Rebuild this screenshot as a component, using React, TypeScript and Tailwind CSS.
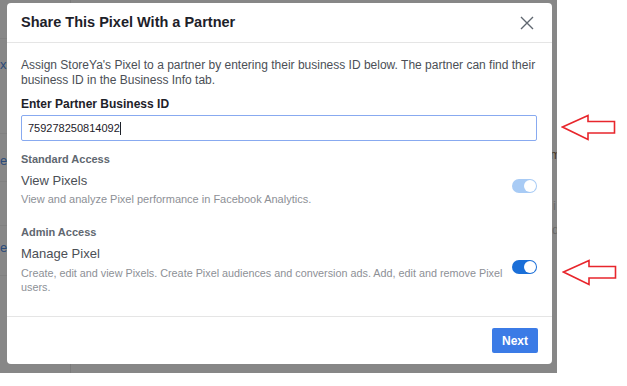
const Toggle = ({ disabled }: { disabled?: boolean }) => {
  return (
    <div
      className={`w-[25px] h-[14px] rounded-full flex items-center justify-end pr-[1px] shrink-0 ${
        disabled ? "bg-[#a8cbf5]" : "bg-[#1b6fd8]"
      }`}
    >
      <div className="w-[12px] h-[12px] rounded-full bg-white"></div>
    </div>
  );
};

const Arrow = ({ className }: { className: string }) => {
  return (
    <svg className={className} width="56" height="28" viewBox="0 0 56 28" fill="none">
      <path
        d="M1.5 13 L27 1.5 L27 7.5 L53.5 7.5 L53.5 19 L27 19 L27 25.5 Z"
        stroke="#e8262c"
        strokeWidth="1.6"
        fill="white"
        strokeLinejoin="miter"
      />
    </svg>
  );
};

export default function App() {
  return (
    <div
      className="w-[627px] h-[386px] bg-white relative overflow-hidden"
      style={{ fontFamily: '"Liberation Sans", Arial, sans-serif' }}
    >
      {/* Backdrop */}
      <div className="w-[557px] h-[373px] bg-[#878787] relative overflow-hidden pt-[3px] pl-[7px]">
        {/* page behind the overlay */}
        <div className="absolute left-[70px] top-0 w-[1px] h-full bg-[#7b7b7b]"></div>
        <div className="absolute left-0 top-[38px] w-[70px] h-[1px] bg-[#808080]"></div>
        <div className="absolute left-0 top-[133px] w-[70px] h-[1px] bg-[#808080]"></div>
        <div className="absolute left-0 top-[181px] w-[70px] h-[1px] bg-[#808080]"></div>
        <div className="absolute left-0 top-[225px] w-[70px] h-[1px] bg-[#808080]"></div>
        <div className="absolute left-0 top-[275px] w-[70px] h-[1px] bg-[#808080]"></div>
        <div className="absolute left-[0px] top-[55px] text-[13px] text-[#2a4a7a]">x</div>
        <div className="absolute left-[0px] top-[151px] text-[13px] text-[#2a4a7a]">e</div>
        <div className="absolute left-[0px] top-[238px] text-[13px] text-[#2a4a7a]">e</div>
        <div className="absolute left-[550px] top-[145px] text-[13px] text-[#4a3a2a]">m</div>
        <div className="absolute left-[553px] top-[196px] text-[13px] text-[#6a6a6a]">i</div>
        <div className="absolute left-[552px] top-[220px] text-[13px] text-[#6a6a6a]">d</div>

        {/* Modal */}
        <div className="relative w-[545px] h-[361px] bg-white rounded-[4px] flex flex-col">
          <div className="h-[40px] px-[14px] flex items-center justify-between border-b border-[#e5e5e5]">
            <div className="text-[14.5px] font-bold text-[#1d2129]">Share This Pixel With a Partner</div>
            <svg width="14" height="14" viewBox="0 0 14 14" className="mr-[4px]">
              <path d="M1 1 L13 13 M13 1 L1 13" stroke="#606770" strokeWidth="1.4" />
            </svg>
          </div>

          <div className="px-[14px] pt-[15px] flex flex-col">
            <div className="text-[12px] leading-[15px] text-[#4b4f56]">
              Assign StoreYa's Pixel to a partner by entering their business ID below. The partner can find their
              business ID in the Business Info tab.
            </div>
            <div className="mt-[8px] text-[12px] leading-[16px] font-bold text-[#1d2129]">
              Enter Partner Business ID
            </div>
            <div className="mt-[3px] h-[26px] w-[516px] border border-[#88aaf0] rounded-[2px] flex items-center px-[6px] text-[11px] text-[#1d2129]">
              759278250814092<span className="w-[1px] h-[13px] bg-[#1d2129]"></span>
            </div>

            <div className="mt-[11px] text-[11px] leading-[14px] font-bold text-[#606770]">Standard Access</div>
            <div className="flex items-center w-[516px]">
              <div className="flex-1">
                <div className="mt-[7px] text-[13px] leading-[16px] text-[#4b4f56]">View Pixels</div>
                <div className="mt-[3px] text-[11px] leading-[14px] text-[#8d9096]">
                  View and analyze Pixel performance in Facebook Analytics.
                </div>
              </div>
              <Toggle disabled />
            </div>

            <div className="mt-[19px] text-[11px] leading-[14px] font-bold text-[#606770]">Admin Access</div>
            <div className="flex items-center w-[516px] gap-[4px]">
              <div className="flex-1 min-w-0">
                <div className="mt-[7px] text-[13px] leading-[16px] text-[#4b4f56]">Manage Pixel</div>
                <div className="mt-[4px] text-[10.8px] leading-[14px] text-[#8d9096] whitespace-nowrap">
                  Create, edit and view Pixels. Create Pixel audiences and conversion ads. Add, edit and remove Pixel
                  <br />
                  users.
                </div>
              </div>
              <Toggle />
            </div>
          </div>

          <div className="mt-auto h-[48px] border-t border-[#e5e5e5] flex items-center justify-end px-[14px]">
            <button className="w-[46px] h-[25px] rounded-[2px] bg-[#3b7be6] text-white text-[12px] font-bold">
              Next
            </button>
          </div>
        </div>
      </div>

      <Arrow className="absolute left-[561px] top-[114px]" />
      <Arrow className="absolute left-[562px] top-[259px]" />
    </div>
  );
}
